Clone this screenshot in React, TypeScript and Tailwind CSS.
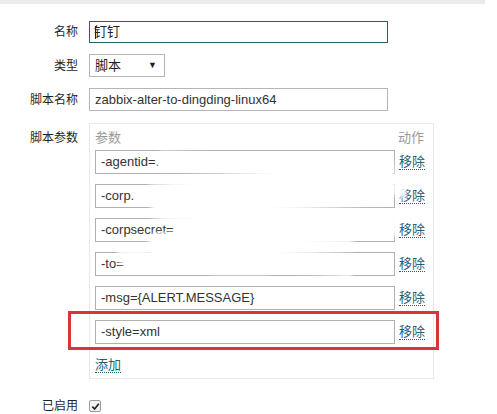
import React from 'react'

const font = { fontFamily: '"Liberation Sans", Arial, "Noto Sans CJK SC", sans-serif' }

const params = ['-agentid=.', '-corp.', '-corpsecret=', '-to=', '-msg={ALERT.MESSAGE}', '-style=xml']

function Smear({ className }: { className: string }) {
  return <div className={`absolute bg-white blur-[2px] ${className}`} />
}

export default function App() {
  return (
    <div className="relative h-[414px] w-full overflow-hidden bg-white text-[12px] text-[#1f1f1f]" style={font}>
      <div className="h-[4px] w-[485px] bg-[#ebebeb]" />

      <div className="mt-[17px] grid grid-cols-[78px_1fr] items-center gap-x-[11px] gap-y-[11px]">
        <div className="text-right">名称</div>
        <div className="flex h-[22px] w-[299px] items-center border border-[#2b5d6c] px-[5px] text-[13px] text-[#222]">
          <span className="mr-[-2px] h-[13px] w-px bg-[#222]" />钉钉
        </div>

        <div className="text-right">类型</div>
        <div className="flex h-[23px] w-[76px] items-center justify-between border border-[#b5b5b5] pl-[5px] pr-[7px] text-[13px]">
          <span>脚本</span>
          <span className="text-[9px]">▼</span>
        </div>

        <div className="text-right">脚本名称</div>
        <div className="flex h-[23px] w-[299px] items-center border border-[#b5b5b5] px-[5px] text-[13px] text-[#333]">
          zabbix-alter-to-dingding-linux64
        </div>

        <div className="mt-[1px] self-start pt-[6px] text-right">脚本参数</div>
        <div className="relative mt-[1px] flex h-[256px] w-[345px] flex-col border border-[#e8e8e8] pl-[5px] pr-[8px] pt-[4px]">
          <div className="flex h-[20px] items-center justify-between text-[13px] text-[#999]">
            <span>参数</span>
            <span className="mr-px">动作</span>
          </div>
          <div className="mt-[2px] flex flex-col gap-[10px]">
            {params.map((p) => (
              <div key={p} className="flex items-center gap-[4px]">
                <div className="flex h-[24px] w-[300px] shrink-0 items-center border border-[#b0b0b0] px-[5px] text-[13px] text-[#333]">
                  {p}
                </div>
                <a className="shrink-0 whitespace-nowrap border-b border-dotted border-[#1f5f78] text-[13px] leading-[15px] text-[#1f5f78]">移除</a>
              </div>
            ))}
          </div>
          <div className="mt-[12px]">
            <a className="whitespace-nowrap border-b border-dotted border-[#1f5f78] text-[13px] leading-[15px] text-[#1f5f78]">添加</a>
          </div>

          <Smear className="left-[70px] top-[14px] h-[8px] w-[120px] rotate-[-4deg]" />
          <Smear className="left-[68px] top-[41px] h-[8px] w-[130px] rotate-[3deg]" />
          <Smear className="left-[60px] top-[48px] h-[34px] w-[245px] rotate-[-6deg]" />
          <Smear className="left-[70px] top-[80px] h-[24px] w-[238px] rotate-[4deg]" />
          <Smear className="left-[305px] top-[62px] h-[10px] w-[8px]" />
          <Smear className="left-[310px] top-[64px] h-[10px] w-[6px]" />
          <Smear className="left-[62px] top-[104px] h-[20px] w-[200px] rotate-[-3deg]" />
          <Smear className="left-[205px] top-[108px] h-[8px] w-[60px]" />
          <Smear className="left-[58px] top-[122px] h-[22px] w-[205px] rotate-[5deg]" />
          <Smear className="left-[28px] top-[126px] h-[14px] w-[30px]" />
          <Smear className="left-[120px] top-[144px] h-[6px] w-[60px]" />
        </div>

        <div className="mt-[7px] text-right">已启用</div>
        <div className="mt-[7px]">
          <div className="flex h-[12px] w-[12px] items-center justify-center rounded-[2px] border border-[#9a9a9a] bg-[#f2f2f2]">
            <svg viewBox="0 0 10 10" className="h-[9px] w-[9px]">
              <path d="M1.5 5.2 L4 7.8 L8.7 2" fill="none" stroke="#222" strokeWidth="1.8" />
            </svg>
          </div>
        </div>
      </div>

      <div className="absolute left-[68px] top-[311px] h-[39px] w-[371px] border-[3px] border-[#d5363c]" />
    </div>
  )
}
